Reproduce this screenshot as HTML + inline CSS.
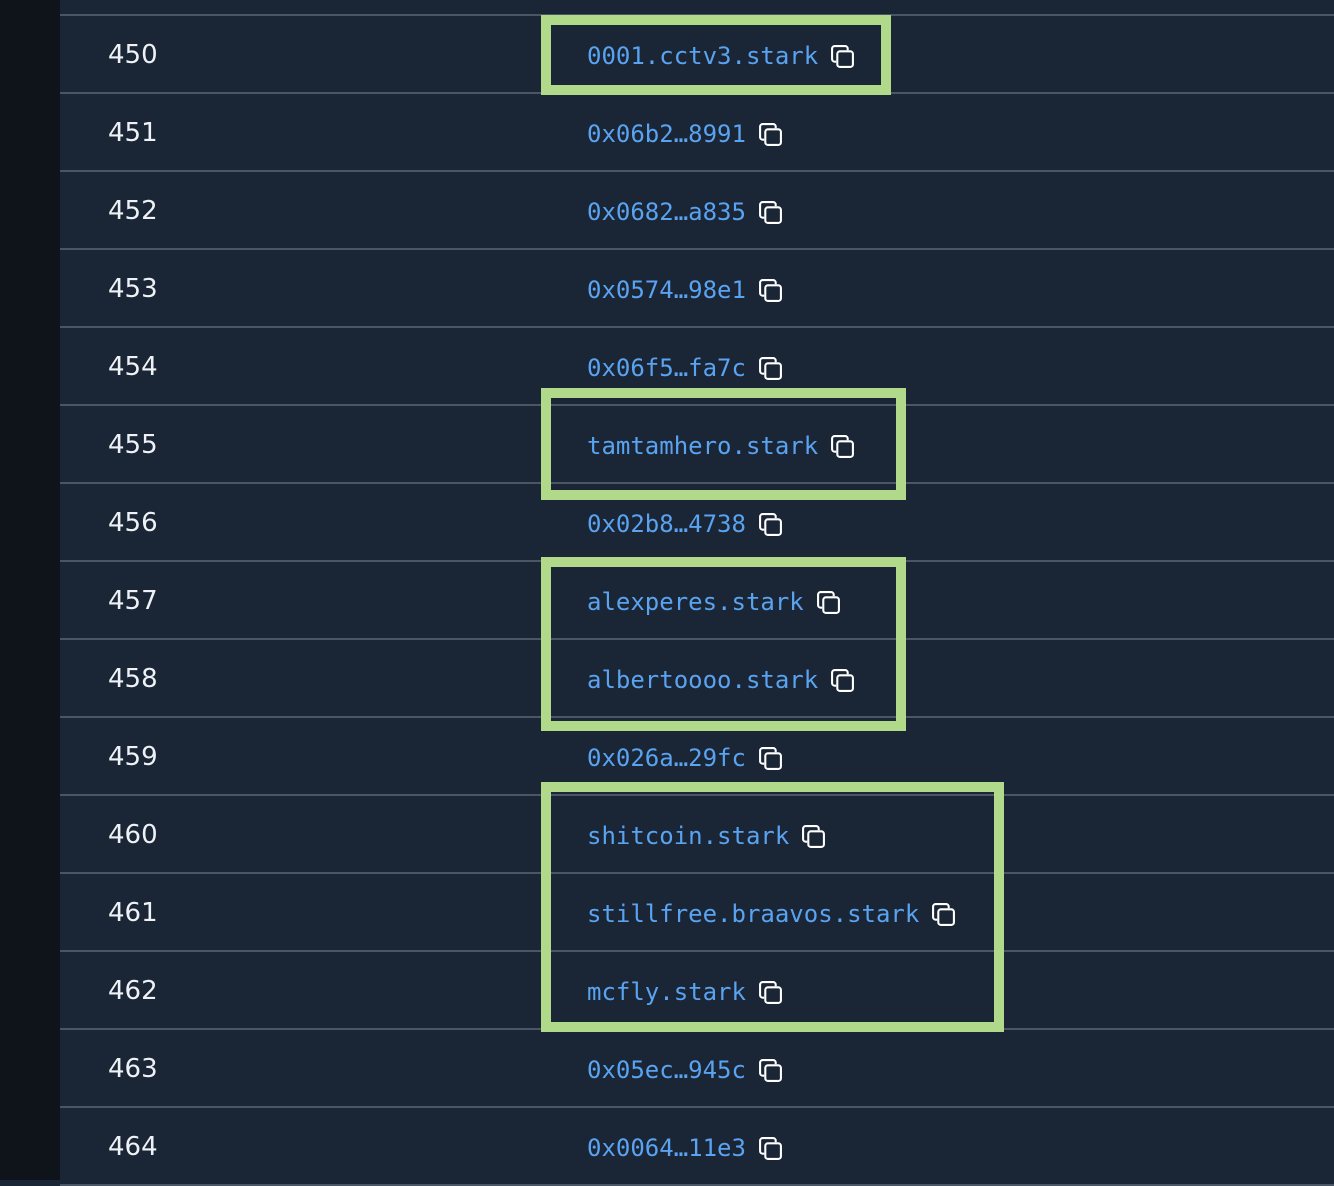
<!DOCTYPE html>
<html><head><meta charset="utf-8"><style>
html,body{margin:0;padding:0;width:1334px;height:1180px;overflow:hidden;background:#1a2535;}
.side{position:absolute;left:0;top:0;width:60px;height:1180px;background:#0f141b;}
.line{position:absolute;left:60px;right:0;height:2px;background:#4a5566;}
.num{position:absolute;left:108px;font:26px "DejaVu Sans","Liberation Sans",sans-serif;color:#eef2f6;line-height:30px;}
.addr{position:absolute;left:587px;font:24px "DejaVu Sans Mono","Liberation Mono",monospace;color:#5aa3f0;line-height:30px;white-space:nowrap;display:flex;align-items:center;}
.addr svg{margin-left:12px;}
.box{position:absolute;border:10px solid #b0d98a;box-sizing:border-box;}
</style></head><body>
<div class="side"></div>
<div id="c"></div>
<script>
var rows=[["450","0001.cctv3.stark"],["451","0x06b2…8991"],["452","0x0682…a835"],["453","0x0574…98e1"],["454","0x06f5…fa7c"],["455","tamtamhero.stark"],["456","0x02b8…4738"],["457","alexperes.stark"],["458","albertoooo.stark"],["459","0x026a…29fc"],["460","shitcoin.stark"],["461","stillfree.braavos.stark"],["462","mcfly.stark"],["463","0x05ec…945c"],["464","0x0064…11e3"]];
var ic='<svg width="25" height="25" viewBox="0 0 24 24" fill="none" stroke="#fff" stroke-width="2"><path d="M6 17H4.5A2.5 2.5 0 0 1 2 14.5V4.5A2.5 2.5 0 0 1 4.5 2h10A2.5 2.5 0 0 1 17 4.5V6"/><rect x="7" y="7" width="15" height="15" rx="2.5"/></svg>';
var h='';
for(var k=0;k<16;k++){h+='<div class="line" style="top:'+(14+78*k)+'px"></div>';}
rows.forEach(function(r,i){var c=54+78*i;h+='<div class="num" style="top:'+(c-14)+'px">'+r[0]+'</div><div class="addr" style="top:'+(c-13)+'px">'+r[1]+ic+'</div>';});
h+='<div class="box" style="left:541px;top:15px;width:350px;height:80px"></div>';
h+='<div class="box" style="left:541px;top:388px;width:365px;height:112px"></div>';
h+='<div class="box" style="left:541px;top:557px;width:365px;height:174px"></div>';
h+='<div class="box" style="left:541px;top:782px;width:463px;height:250px"></div>';
document.getElementById('c').innerHTML=h;
</script>
</body></html>
